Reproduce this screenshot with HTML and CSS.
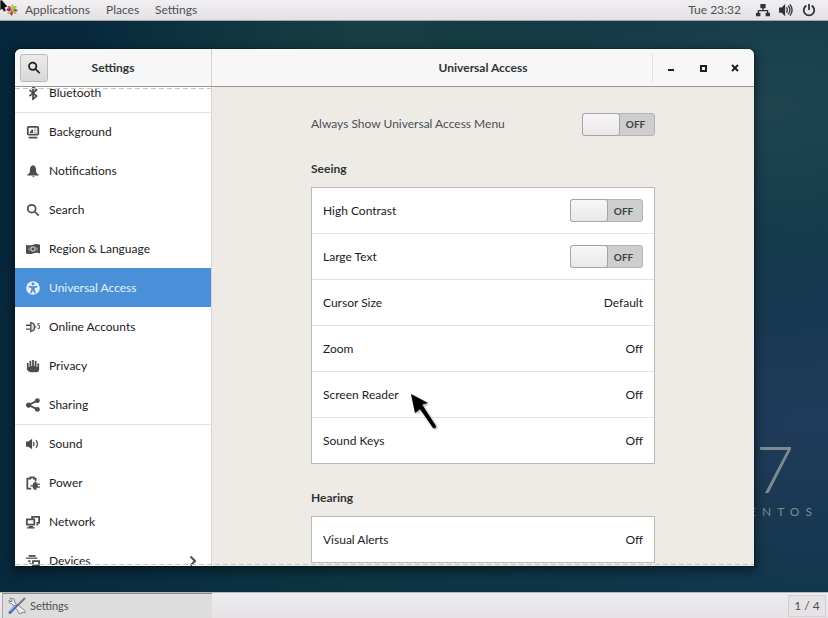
FILE: index.html
```html
<!DOCTYPE html>
<html lang="en">
<head>
<meta charset="utf-8">
<title>Settings</title>
<link rel="stylesheet" href="styles.css">
</head>
<body>
<header class="topbar">
  <nav class="topbar-menus">
    <button class="bar-item apps" type="button">
      <svg class="distro" viewBox="0 0 12 12" aria-hidden="true"><path fill="#efb62e" d="M6 0l2 2v3L6 6 5 2z"/><path fill="#a14f8c" d="M1.500 2H4l2 4-3-1z"/><path fill="#932279" d="M0 6l2-2 4 2-3 1.500z"/><path fill="#5a59a8" d="M12 6l-2 2-4-2 3-1z"/><path fill="#9ccd2a" d="M8 2h2.500v2.500L6 6z"/><path fill="#efa724" d="M4 10H1.500V8L6 6z"/><path fill="#7a3f9a" d="M6 12l-2-2 2-4 1 3z"/><path fill="#efa724" d="M10.500 10H8L6 6l4 2z"/></svg>Applications</button>
    <button class="bar-item" type="button">Places</button>
    <button class="bar-item" type="button">Settings</button>
  </nav>
  <button class="bar-item" type="button">Tue 23:32</button>
  <button class="bar-item tray" type="button" aria-label="System menu">
    <svg class="icon" viewBox="0 0 16 16"><path d="M5 1h6v5H8.800v2H14v3h2v4h-5v-4h1.500V9.500h-9V11H5v4H0v-4h2V8h5.200V6H5z"/></svg>
    <svg class="icon" viewBox="0 0 16 16"><path d="M0 5h3l4-4v14l-4-4H0z"/><path class="line mid" d="M8.500 5q2 3 0 6M10.500 3q4 5 0 10M12.500 1.500q5 6.500 0 13"/></svg>
    <svg class="icon" viewBox="0 0 16 16"><path class="line thick" d="M8 1v7M5 3a6 6 0 1 0 6 0"/></svg>
  </button>
  <svg class="corner-pointer" viewBox="0 0 12 13" aria-hidden="true"><path d="M0 0h2l6 7-3 .5L6 11l-2 1-2-3-2 2z" fill="#111" stroke="#fff" stroke-width=".6"/></svg>
</header>

<main class="desktop">
  <div class="wallpaper-mark"><span class="mark-number">7</span><span class="mark-name">CENTOS</span></div>
  <section class="window">
    <header class="titlebar">
      <div class="title-side">
        <button class="search-button" type="button" aria-label="Search"><svg class="icon" viewBox="0 0 16 16"><circle class="line thick" cx="6.500" cy="6" r="4.200"/><path class="line heavy" d="M9.800 9.300L14.500 14"/></svg></button>
        <h2 class="title">Settings</h2>
      </div>
      <div class="title-main">
        <h1 class="title">Universal Access</h1>
        <div class="window-buttons">
          <button type="button" aria-label="Minimize"><svg viewBox="0 0 8 8"><path d="M1 5h6v2H1z"/></svg></button>
          <button type="button" aria-label="Maximize"><svg viewBox="0 0 8 8"><path fill-rule="evenodd" d="M1 1h7v7H1zM3 3v3h3V3z"/></svg></button>
          <button type="button" aria-label="Close"><svg viewBox="0 0 8 8"><path class="line thick" d="M1 1l6 6M7 1L1 7"/></svg></button>
        </div>
      </div>
    </header>

    <div class="window-body">
      <nav class="sidebar">
        <div class="side-list">
          <a href="#bluetooth"><svg class="icon" viewBox="0 0 16 16"><path class="line thick" d="M4 4.500l8 7L8 15V1l4 3.500-8 7"/></svg>Bluetooth</a>
          <a class="group-start" href="#background"><svg class="icon" viewBox="0 0 16 16"><path class="line thick" d="M3 2h10q1 0 1 1v7q0 1-1 1H3q-1 0-1-1V3q0-1 1-1z"/><path d="M3 13.500h10V15.500H3zM4.500 7h1.500V5H8v4H4.500z"/><path class="line" d="M9 4.500h3M9 6.500h3M9 8.500h3" stroke-opacity=".6"/></svg>Background</a>
          <a href="#notifications"><svg class="icon" viewBox="0 0 16 16"><path d="M8 1.500C5.500 1.500 4.500 4 4.500 7c0 3-1 4-3 5v1h13v-1c-2-1-3-2-3-5 0-3-1-5.500-3.500-5.500zM7 14h3L8.500 15.500z"/></svg>Notifications</a>
          <a href="#search"><svg class="icon" viewBox="0 0 16 16"><circle class="line thick" cx="6.500" cy="6.500" r="4.500"/><path class="line heavy" d="M10 10l4.500 4.500"/></svg>Search</a>
          <a href="#region"><svg class="icon" viewBox="0 0 16 16"><path d="M0 3q4 1.500 8 0t8 0v10q-4-1.500-8 0t-8 0z"/><circle class="cut" cx="8" cy="8" r="2.500"/><path class="cut" d="M4.500 6L3 8l1.500 2M11.500 6L13 8l-1.500 2" stroke-opacity=".6"/></svg>Region &amp; Language</a>
          <a class="selected" href="#access" aria-current="page"><svg class="icon" viewBox="0 0 16 16"><circle cx="8" cy="8" r="7.800"/><circle cx="8" cy="3.500" r="1.700" fill="#4a90d9"/><path fill="#4a90d9" d="M3 5.500l4 .5h2l4-.5v1.700L10 8v2l1.500 4H9.700L8 10.500 6.300 14H4.500L6 10V8L3 7.200z"/></svg>Universal Access</a>
          <a href="#accounts"><svg class="icon" viewBox="0 0 16 16"><path class="line mid" d="M0 6h5M0 10.500h5M5.500 2v12M5.500 3l3 1q1.500 1.500 1.500 4t-1.500 4l-3 1"/><path fill-opacity=".25" d="M6 3q4 1 4 5t-4 5z"/><path class="line" d="M10 8h2M15.500 4h-2v2.500h2v3h-2.500"/></svg>Online Accounts</a>
          <a href="#privacy"><svg class="icon" viewBox="0 0 16 16"><path d="M1 4.500h2V9h1V2h2v6h1V1h2v7h1V2h2v7h1V5h2v7q0 3-3 3H5q-2 0-4-3z"/></svg>Privacy</a>
          <a href="#sharing"><svg class="icon" viewBox="0 0 16 16"><path class="line thick" d="M13 3L3 8l10 5"/><circle cx="13" cy="3" r="2.800"/><circle cx="3" cy="8" r="3"/><circle cx="13" cy="13" r="2.800"/></svg>Sharing</a>
          <a class="group-start" href="#sound"><svg class="icon" viewBox="0 0 16 16"><path d="M0 5h2.500L7 2v12l-4.500-3H0z"/><path class="line mid" d="M8.500 5.500q1.500 2.500 0 5M11.500 3.500q3 4.500 0 9"/></svg>Sound</a>
          <a href="#power"><svg class="icon" viewBox="0 0 16 16"><path class="line heavy" d="M11 6V3H9V1.500H5V3H1.500v11.500H6"/><path d="M12 6.500v2h4V10h-2.500v2H16v1.500h-4V16q-4 0-4.500-4H5v-1.500h2.500q.5-4 4.500-4z"/></svg>Power</a>
          <a href="#network"><svg class="icon" viewBox="0 0 16 16"><path class="line thick" d="M7 4V2h8v7h-3M1 5h8.500v6H1z"/><path d="M3 12.500h5V14h2v1.500H1V14h2zM12 10h2v2h-2z"/></svg>Network</a>
          <a href="#devices"><svg class="icon" viewBox="0 0 16 16"><path d="M3 1h8v2H3zM0 4h13v1.500H0zM2.500 7H5v2H2.500zM4 10h2v1.500H4z"/><path class="line thick" d="M8 8h7v5H8z"/><path d="M9 14h5v1.500H9z"/></svg>Devices<svg class="chevron" viewBox="0 0 8 12"><path class="line thick" d="M1.500 1.500L6 6l-4.500 4.500"/></svg></a>
        </div>
      </nav>

      <div class="panel">
        <div class="panel-content">
          <label class="row plain"><span>Always Show Universal Access Menu</span><span class="switch"><input type="checkbox" role="switch"><span class="state">OFF</span></span></label>
          <h3>Seeing</h3>
          <div class="card">
            <label class="row"><span>High Contrast</span><span class="switch"><input type="checkbox" role="switch"><span class="state">OFF</span></span></label>
            <label class="row"><span>Large Text</span><span class="switch"><input type="checkbox" role="switch"><span class="state">OFF</span></span></label>
            <button class="row" type="button"><span>Cursor Size</span><span>Default</span></button>
            <button class="row" type="button"><span>Zoom</span><span>Off</span></button>
            <button class="row" type="button"><span>Screen Reader</span><span>Off</span><svg class="pointer" viewBox="0 0 28 38" aria-hidden="true"><path d="M1 1l17 9-6 1.500L26 33q0 3-3 2L10 16l-5 4z"/></svg></button>
            <button class="row" type="button"><span>Sound Keys</span><span>Off</span></button>
          </div>
          <h3>Hearing</h3>
          <div class="card">
            <button class="row" type="button"><span>Visual Alerts</span><span>Off</span></button>
          </div>
        </div>
      </div>
    </div>
  </section>
</main>

<footer class="taskbar">
  <button class="task" type="button"><svg viewBox="0 0 18 18" aria-hidden="true"><path d="M2 1l4 1 1 4 8 6q3 1 2 4l-3-1-1 2q-3 0-3-3L4 7Q0 6 1 3l2 2 1-1z" fill="#eee" stroke="#888"/><path d="M17 1L9 9" stroke="#777" stroke-width="2"/><path d="M8 9L2 15.500" stroke="#3f70b0" stroke-width="3" stroke-linecap="round"/><path d="M7.500 8.500L2 14.500" stroke="#a3c0e2"/></svg>Settings</button>
  <button class="workspace" type="button">1 / 4</button>
</footer>
</body>
</html>
```
FILE: styles.css
```css
*,
*::before,
*::after {
  box-sizing: border-box;
}

body {
  margin: 0;
  height: 100vh;
  display: grid;
  grid-template-rows: 21px minmax(0, 1fr) 26px;
  font: 12px/16px Lato, "Open Sans", sans-serif;
  color: #1c2022;
  overflow: hidden;
}

button {
  margin: 0;
  padding: 0;
  border: 0;
  background: none;
  font: inherit;
  color: inherit;
}

h1, h2, h3 {
  margin: 0;
  font-size: 12px;
  line-height: 16px;
  font-weight: 700;
  color: #2e3436;
}

svg {
  flex: none;
  fill: currentColor;
}

.icon {
  width: 14px;
  height: 14px;
}

.line {
  fill: none;
  stroke: currentColor;
  stroke-width: 1px;
}

.mid {
  stroke-width: 1.5px;
}

.thick,
.heavy {
  stroke-width: 2px;
}

.cut {
  fill: none;
  stroke: #fff;
}

/* Top bar */
.topbar {
  position: relative;
  display: flex;
  align-items: center;
  padding: 0 12px 0 6px;
  background: linear-gradient(#f1eff1, #e4e1e4);
  border-bottom: 1px solid #a5a8aa;
  color: #4b5052;
}

.topbar-menus {
  display: flex;
  gap: 16px;
  margin-right: auto;
}

.bar-item {
  display: flex;
  align-items: center;
}

.apps {
  gap: 7px;
}

.distro {
  width: 12px;
  height: 12px;
}

.tray {
  gap: 9px;
  margin-left: 15px;
  color: #2e3436;
}

.corner-pointer {
  position: absolute;
  left: 0;
  top: 0;
  width: 12px;
  height: 13px;
}

/* Desktop */
.desktop {
  position: relative;
  display: grid;
  padding: 28px 74px 26px 15px;
  background:
    radial-gradient(ellipse at 45% 0, rgba(32, 72, 68, 0.6), transparent 45%),
    radial-gradient(ellipse at 98% 70%, #213b5a, transparent 35%),
    radial-gradient(ellipse at 94% 15%, #1f4450, transparent 30%),
    linear-gradient(100deg, #06263b, #0d3443 50%, #10364b);
}

.wallpaper-mark {
  position: absolute;
  right: 10px;
  bottom: 72px;
  display: flex;
  flex-direction: column;
  align-items: flex-end;
  color: #7d8b90;
}

.mark-number {
  padding-right: 24px;
  font-size: 66px;
  line-height: 72px;
  font-weight: 300;
}

.mark-name {
  letter-spacing: 6px;
}

/* Window */
.window {
  position: relative;
  display: grid;
  grid-template-rows: 38px minmax(0, 1fr);
  min-height: 0;
  border-radius: 6px 6px 0 0;
  overflow: hidden;
  background: #eeebe7;
  box-shadow: 0 3px 10px 2px rgba(0, 0, 0, 0.45), 0 0 0 1px rgba(0, 0, 0, 0.2);
}

.titlebar,
.window-body {
  display: grid;
  grid-template-columns: 197px minmax(0, 1fr);
  min-height: 0;
}

.titlebar {
  background: #f7f7f7;
  border-bottom: 1px solid #96968f;
}

.title-side,
.title-main {
  position: relative;
  display: flex;
  align-items: center;
}

.title-side {
  border-right: 1px solid #d5d3d1;
  padding-left: 5px;
}

.title {
  flex: 1;
  text-align: center;
}

.title-side .title {
  padding-right: 33px;
}

.search-button {
  display: grid;
  place-items: center;
  width: 28px;
  height: 28px;
  border: 1px solid #bcbab8;
  border-radius: 3px;
  background: linear-gradient(#ebebeb, #d9d8d7);
}

.title-main .title {
  padding-left: 102px;
}

.window-buttons {
  display: flex;
  width: 102px;
  height: 28px;
  padding-left: 2px;
  border-left: 1px solid #e3e3e3;
}

.window-buttons button {
  display: grid;
  place-items: center;
  width: 32px;
}

.window-buttons svg {
  width: 8px;
  height: 8px;
}

/* Sidebar */
.sidebar {
  overflow: hidden;
  background: #fff;
  border-right: 1px solid #d9d6d3;
}

.side-list {
  display: flex;
  flex-direction: column;
  margin-top: -14px;
}

.side-list a {
  flex: none;
  display: flex;
  align-items: center;
  gap: 9px;
  height: 39px;
  padding: 0 14px 0 11px;
  color: #1c2022;
  text-decoration: none;
}

.side-list .icon {
  color: #4a4e50;
}

.side-list .group-start {
  border-top: 1px solid #e3e3e3;
}

.side-list .selected,
.side-list .selected .icon {
  background: #4a90d9;
  color: #e6f0fa;
}

.chevron {
  width: 8px;
  height: 12px;
  margin-left: auto;
  color: #4a4e50;
}

.sidebar::before,
.window::after {
  content: "";
  position: absolute;
  height: 1px;
  background: repeating-linear-gradient(90deg, #c2c2be 0 5px, transparent 5px 8px);
}

.sidebar::before {
  top: 39px;
  left: 0;
  width: 196px;
}

.window::after {
  bottom: 1px;
  left: 0;
  right: 0;
}

/* Settings panel */
.panel {
  overflow: hidden;
  padding: 14px 16px 0;
}

.panel-content {
  max-width: 344px;
  margin: 0 auto;
}

.panel h3 {
  padding: 14px 0 10px;
}

.card + h3 {
  padding-top: 26px;
}

.card {
  background: #fff;
  border: 1px solid #b9b9b6;
  border-bottom: 0;
}

.row {
  position: relative;
  display: flex;
  align-items: center;
  justify-content: space-between;
  width: 100%;
  height: 46px;
  padding: 0 11px;
  border-bottom: 1px solid #e3e3e3;
}

.card .row:last-child {
  border-bottom-color: #b9b9b6;
}

.row.plain {
  padding: 0;
  border: 0;
  color: #4a4f51;
}

.switch {
  position: relative;
  display: grid;
  width: 73px;
  height: 23px;
}

.switch input,
.state {
  grid-area: 1 / 1;
}

.switch input {
  appearance: none;
  margin: 0;
  border: 1px solid #b4b4b1;
  border-radius: 3px;
  background: #cecece;
}

.switch input::before {
  content: "";
  display: block;
  width: 38px;
  height: 23px;
  margin: -1px;
  border: 1px solid #a5a5a2;
  border-radius: 3px;
  background: linear-gradient(#f8f6f8, #f1eff1 50%, #e9e8e9);
}

.state {
  align-self: center;
  padding-left: 34px;
  text-align: center;
  font-size: 10px;
  line-height: 14px;
  font-weight: 700;
  color: #3b4244;
  pointer-events: none;
  z-index: 1;
}

.pointer {
  position: absolute;
  left: 98px;
  top: 21px;
  z-index: 2;
  width: 28px;
  height: 38px;
  fill: #000;
  filter: drop-shadow(1px 1px 1px rgba(0, 0, 0, 0.45));
}

/* Taskbar */
.taskbar {
  display: flex;
  justify-content: space-between;
  padding-left: 2px;
  background: linear-gradient(#efedef, #e6e2e6);
  border-top: 1px solid #b5b7b8;
  color: #4b5052;
}

.task {
  display: flex;
  align-items: center;
  gap: 4px;
  width: 210px;
  padding: 0 5px;
  border-top: 1px solid #8c8c8c;
  border-left: 1px solid #a8a8a8;
  background: #dddddd;
  font-size: 11px;
}

.task svg {
  width: 18px;
  height: 18px;
}

.workspace {
  width: 38px;
  margin: 2px 2px 1px 0;
  border: 1px solid #d2d0d2;
  background: #e5e3e5;
}
```
